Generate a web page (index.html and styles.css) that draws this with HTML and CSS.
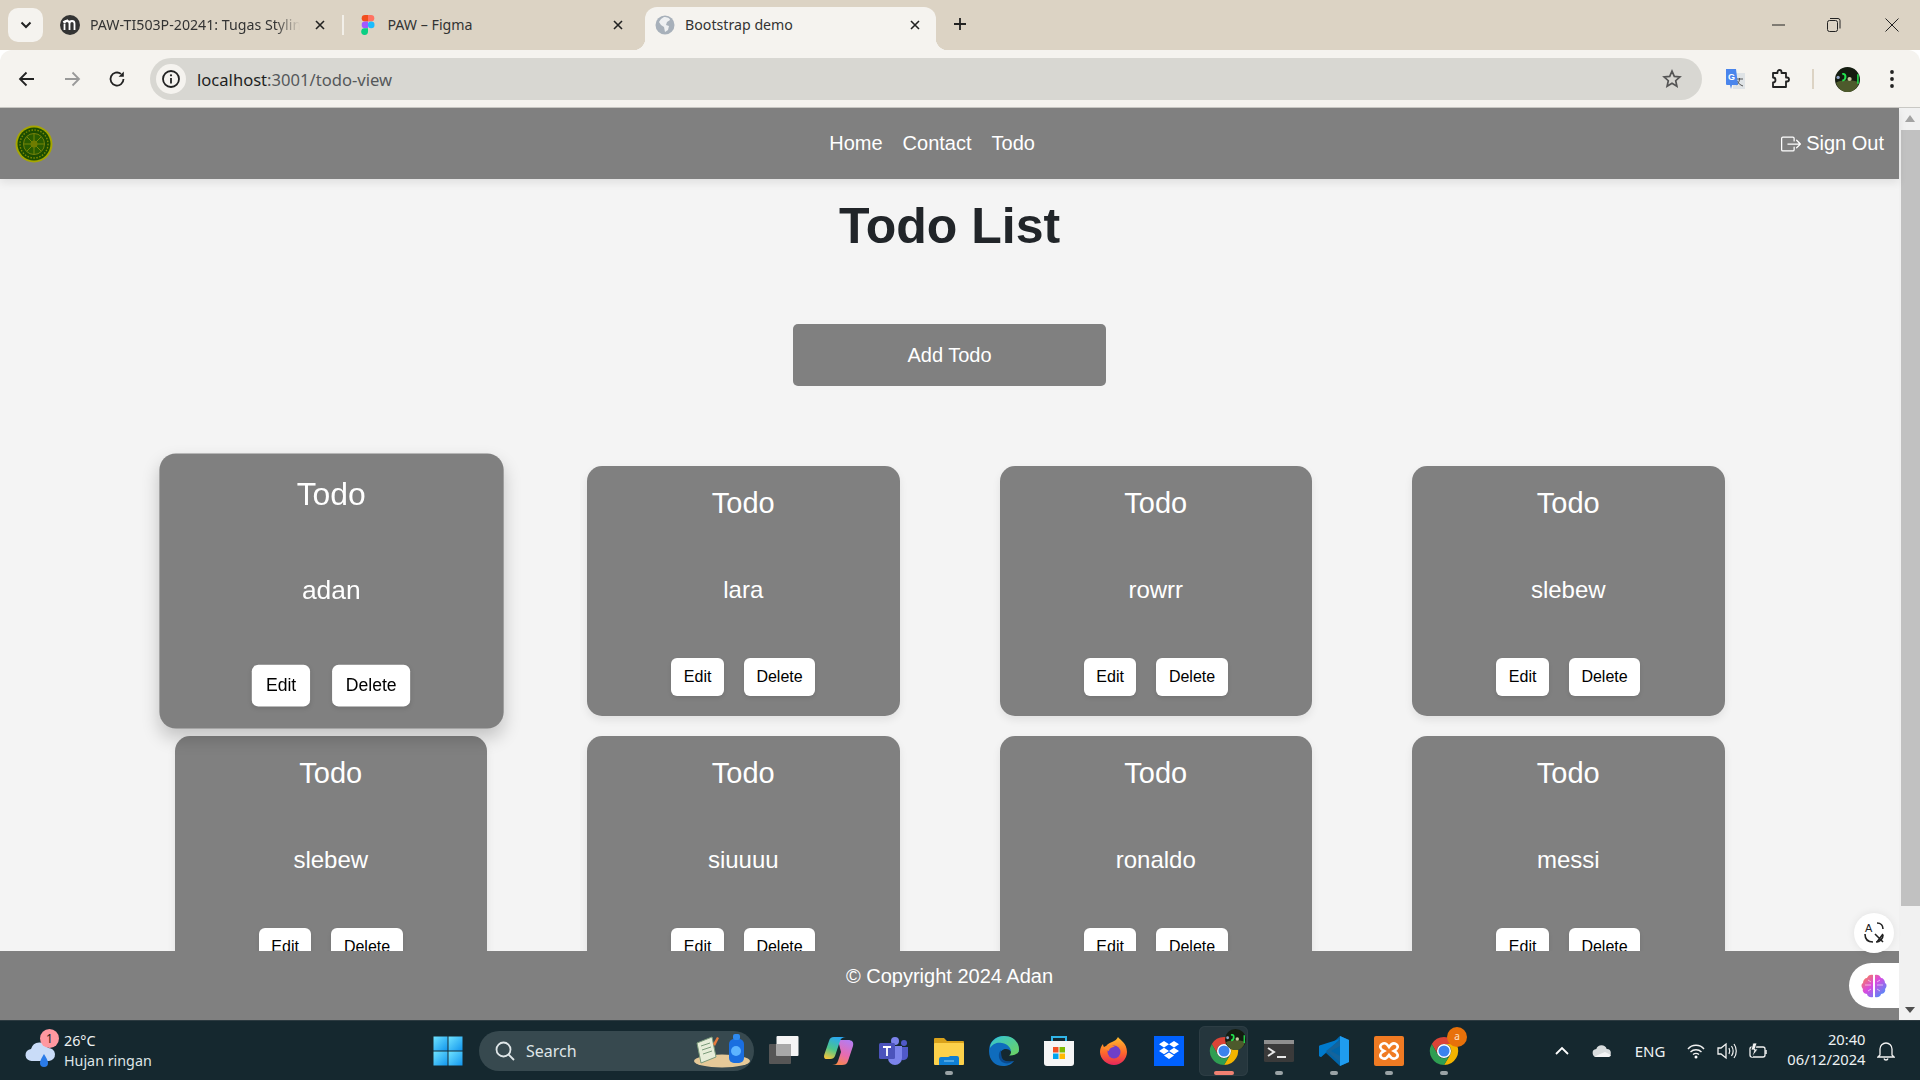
FILE: index.html
```html
<!DOCTYPE html>
<html lang="en">
<head>
<meta charset="utf-8">
<title>Bootstrap demo</title>
<link rel="stylesheet" href="styles.css">
</head>
<body>
<svg class="defs" width="0" height="0" aria-hidden="true">
  <defs>
    <symbol id="chrome" viewBox="0 0 32 32">
      <path fill="#db4437" d="M29 8.5A15 15 0 0 0 3 8.5L9.5 20A7.5 7.5 0 0 1 16 8.5Z"/>
      <path fill="#f4b400" d="M29 8.5A15 15 0 0 1 16 31L22.5 20A7.5 7.5 0 0 0 16 8.5Z"/>
      <path fill="#2f9e52" d="M16 31A15 15 0 0 1 3 8.5L9.5 20A7.5 7.5 0 0 0 22.5 20Z"/>
      <circle cx="16" cy="16" r="7.5" fill="#fff"/>
      <circle cx="16" cy="16" r="5.9" fill="#3b82ee"/>
    </symbol>
    <symbol id="avatar" viewBox="0 0 24 24">
      <circle cx="12" cy="12" r="12" fill="#141c10"/>
      <path fill="#4d5a2c" d="M1 15c5-3 17-3 22 0-2 6-6 9-11 9S3 21 1 15z"/>
      <circle cx="3" cy="10" r="1.6" fill="#8fa5c9"/>
      <path d="M7 7c4-2 4 6 0 6" fill="none" stroke="#22e24e" stroke-width="2"/>
      <circle cx="14" cy="11.500" r="2" fill="#c8c8a0"/>
      <path d="M22 7v9" stroke="#22e24e" stroke-width="1.500"/>
    </symbol>
    <linearGradient id="copilotA" x1="0.6" y1="0" x2="0.2" y2="1">
      <stop offset="0" stop-color="#2aa8f2"/><stop offset=".55" stop-color="#4cc58c"/><stop offset="1" stop-color="#f2c53d"/>
    </linearGradient>
    <linearGradient id="copilotB" x1="0.7" y1="0" x2="0.3" y2="1">
      <stop offset="0" stop-color="#b57cf0"/><stop offset=".55" stop-color="#e76bb0"/><stop offset="1" stop-color="#f7884a"/>
    </linearGradient>
    <linearGradient id="edgeA" x1="0" y1="0" x2="1" y2="1">
      <stop offset="0" stop-color="#32c4d8"/><stop offset="1" stop-color="#6fd35c"/>
    </linearGradient>
    <linearGradient id="foxA" x1="0" y1="0" x2="0" y2="1">
      <stop offset="0" stop-color="#ffbd2e"/><stop offset=".55" stop-color="#ff6a2a"/><stop offset="1" stop-color="#e6265c"/>
    </linearGradient>
    <linearGradient id="brainA" x1="0" y1="0" x2="1" y2="1">
      <stop offset="0" stop-color="#ff8a3c"/><stop offset=".45" stop-color="#d94be0"/><stop offset="1" stop-color="#2f9bff"/>
    </linearGradient>
    <linearGradient id="winA" x1="0" y1="0" x2="1" y2="1">
      <stop offset="0" stop-color="#6fe3ff"/><stop offset="1" stop-color="#1296ee"/>
    </linearGradient>
  </defs>
</svg>

<div class="screen">
  <header class="tabstrip">
    <button class="tab-search" type="button">
      <svg width="12" height="8" viewBox="0 0 12 8"><path d="M1.500 1.500 6 6l4.500-4.500" fill="none" stroke="#222" stroke-width="2"/></svg>
    </button>
    <div class="tabs">
      <div class="tab">
        <svg class="favicon" viewBox="0 0 20 20"><circle cx="10" cy="10" r="10" fill="#333"/><path d="M4.500 15V9M9.500 15V8.500a2.500 2.500 0 0 0-5 0M14.500 15V8.500a2.500 2.500 0 0 0-5 0" fill="none" stroke="#fff" stroke-width="1.800"/><path d="M3 7l5-2" stroke="#fff" stroke-width="1.500"/></svg>
        <span class="tab-title tab-title-fade">PAW-TI503P-20241: Tugas Stylin</span>
        <svg class="tab-close" viewBox="0 0 10 10"><path d="M1 1l8 8M9 1l-8 8" stroke="#222" stroke-width="1.600"/></svg>
        <span class="tab-sep"></span>
      </div>
      <div class="tab">
        <svg class="favicon" viewBox="0 0 20 20"><path fill="#f24e1e" d="M10 0H7a3.300 3.300 0 0 0 0 6.600h3z"/><path fill="#ff7262" d="M10 0h3a3.300 3.300 0 0 1 0 6.600h-3z"/><path fill="#a259ff" d="M10 6.600H7a3.300 3.300 0 0 0 0 6.600h3z"/><circle cx="13.200" cy="9.900" r="3.300" fill="#1abcfe"/><path fill="#0acf83" d="M10 13.200H7a3.400 3.400 0 1 0 3 3.400z"/></svg>
        <span class="tab-title">PAW – Figma</span>
        <svg class="tab-close" viewBox="0 0 10 10"><path d="M1 1l8 8M9 1l-8 8" stroke="#222" stroke-width="1.600"/></svg>
      </div>
      <div class="tab tab-active">
        <svg class="favicon" viewBox="0 0 20 20"><circle cx="10" cy="10" r="9.500" fill="#a7b0ba"/><path fill="#eef0f2" d="M9 2c3 0 6 1 6 3l-3 2-1 3 3 1-1 4-3 2-1-5-3-2-2-3 2-3z"/></svg>
        <span class="tab-title">Bootstrap demo</span>
        <svg class="tab-close" viewBox="0 0 10 10"><path d="M1 1l8 8M9 1l-8 8" stroke="#222" stroke-width="1.600"/></svg>
      </div>
    </div>
    <svg class="new-tab" width="14" height="14" viewBox="0 0 14 14"><path d="M7 1v12M1 7h12" stroke="#222" stroke-width="1.800"/></svg>
    <div class="window-controls">
      <svg width="14" height="14" viewBox="0 0 14 14"><path d="M0 7h13" stroke="#222" stroke-width="1"/></svg>
      <svg class="win-restore" width="14" height="14" viewBox="0 0 14 14"><rect x=".5" y="2.500" width="10" height="11" rx="2" fill="none" stroke="#222"/><path d="M3 .5h8a2 2 0 0 1 2 2v8" fill="none" stroke="#222"/></svg>
      <svg width="14" height="14" viewBox="0 0 14 14"><path d="M.5.500l13 13M13.500.500l-13 13" stroke="#222"/></svg>
    </div>
  </header>

  <nav class="toolbar">
    <button class="tool" type="button"><svg width="18" height="16" viewBox="0 0 18 16"><path d="M16 8H2M8.500 1.500 2 8l6.500 6.500" fill="none" stroke="#222" stroke-width="1.800"/></svg></button>
    <button class="tool" type="button"><svg width="18" height="16" viewBox="0 0 18 16"><path d="M2 8h14M9.500 1.500 16 8l-6.500 6.500" fill="none" stroke="#999" stroke-width="1.800"/></svg></button>
    <button class="tool" type="button"><svg width="18" height="18" viewBox="0 0 18 18"><path d="M15.500 9A6.500 6.500 0 1 1 13 3.900" fill="none" stroke="#222" stroke-width="1.800"/><path d="M15.800 1.500v5.200h-5.200z" fill="#222"/></svg></button>
    <div class="omnibox">
      <span class="site-info"><svg width="20" height="20" viewBox="0 0 20 20"><circle cx="10" cy="10" r="8" fill="none" stroke="#222" stroke-width="1.800"/><path d="M10 9v5.500" stroke="#222" stroke-width="1.800"/><circle cx="10" cy="6.300" r="1.100" fill="#222"/></svg></span>
      <span class="url"><span class="url-host">localhost</span>:3001/todo-view</span>
      <svg class="star" width="20" height="20" viewBox="0 0 20 20"><path d="M10 2.200l2.300 5.200 5.600.6-4.200 3.700 1.200 5.500-4.900-2.900-4.900 2.900 1.200-5.500L2.100 8l5.600-.6z" fill="none" stroke="#555" stroke-width="1.700"/></svg>
    </div>
    <div class="tool-group">
      <span class="tool"><svg width="22" height="22" viewBox="0 0 22 22"><rect x="9" y="5" width="12" height="16" fill="#dfe3e6"/><path d="M12 11h7M15.500 10v1c0 3-2 5-3.500 6M13 13c1 2 3 4 6 5" fill="none" stroke="#555" stroke-width="1"/><path fill="#4a85ec" d="M2 1h10l2 16H8l-1 4-1-4H3a1 1 0 0 1-1-1z"/><text class="gt-letter" x="4" y="12">G</text></svg></span>
      <span class="tool"><svg width="20" height="20" viewBox="0 0 20 20"><path d="M2 4h4.500V3a2 2 0 0 1 4 0v1H15v4.500h1a2 2 0 0 1 0 4h-1V18H2v-4.500a2.500 2.500 0 0 0 0-5z" fill="none" stroke="#222" stroke-width="1.800" stroke-linejoin="round"/></svg></span>
      <span class="tool-divider"></span>
      <span class="tool"><svg width="25" height="25"><use href="#avatar"/></svg></span>
      <span class="tool"><svg width="6" height="20" viewBox="0 0 6 20"><circle cx="3" cy="3" r="1.900" fill="#222"/><circle cx="3" cy="10" r="1.900" fill="#222"/><circle cx="3" cy="17" r="1.900" fill="#222"/></svg></span>
    </div>
  </nav>

  <div class="viewport">
    <div class="page">
      <div class="site-nav">
        <a class="brand">
          <svg width="38" height="38" viewBox="0 0 38 38">
            <circle cx="19" cy="19" r="18.500" fill="#a6a600"/>
            <circle cx="19" cy="19" r="16.500" fill="#1c4d00"/>
            <circle cx="19" cy="19" r="14" fill="none" stroke="#7f8a00" stroke-width="1.400" stroke-dasharray="1.500 1.500"/>
            <circle cx="19" cy="19" r="10.500" fill="#2a5c00" stroke="#76820a" stroke-width="1"/>
            <g stroke="#808c08" stroke-width=".9">
              <path d="M19 9v20M9 19h20M11.900 11.900l14.200 14.200M26.100 11.900 11.900 26.100"/>
            </g>
            <circle cx="19" cy="19" r="3.500" fill="#6f7c00"/>
          </svg>
        </a>
        <div class="site-links">
          <a class="site-link">Home</a>
          <a class="site-link">Contact</a>
          <a class="site-link">Todo</a>
        </div>
        <a class="sign-out">
          <svg width="20" height="20" viewBox="0 0 16 16" fill="#fff"><path fill-rule="evenodd" d="M10 12.500a.5.5 0 0 1-.5.5h-8a.5.5 0 0 1-.5-.5v-9a.5.5 0 0 1 .5-.5h8a.5.5 0 0 1 .5.500v2a.5.5 0 0 0 1 0v-2A1.500 1.500 0 0 0 9.500 2h-8A1.500 1.500 0 0 0 0 3.500v9A1.500 1.500 0 0 0 1.500 14h8a1.500 1.500 0 0 0 1.500-1.500v-2a.5.5 0 0 0-1 0z"/><path fill-rule="evenodd" d="M15.854 8.354a.5.5 0 0 0 0-.708l-3-3a.5.5 0 0 0-.708.708L14.293 7.500H5.500a.5.5 0 0 0 0 1h8.793l-2.147 2.146a.5.5 0 0 0 .708.708z"/></svg>
          <span>Sign Out</span>
        </a>
      </div>

      <main class="content">
        <h1 class="page-title">Todo List</h1>
        <button class="add-btn" type="button">Add Todo</button>
        <section class="todo-grid">
          <article class="todo-card todo-card-hover">
            <h2 class="todo-title">Todo</h2><p class="todo-text">adan</p>
            <div class="todo-actions"><button class="todo-btn" type="button">Edit</button><button class="todo-btn" type="button">Delete</button></div>
          </article>
          <article class="todo-card">
            <h2 class="todo-title">Todo</h2><p class="todo-text">lara</p>
            <div class="todo-actions"><button class="todo-btn" type="button">Edit</button><button class="todo-btn" type="button">Delete</button></div>
          </article>
          <article class="todo-card">
            <h2 class="todo-title">Todo</h2><p class="todo-text">rowrr</p>
            <div class="todo-actions"><button class="todo-btn" type="button">Edit</button><button class="todo-btn" type="button">Delete</button></div>
          </article>
          <article class="todo-card">
            <h2 class="todo-title">Todo</h2><p class="todo-text">slebew</p>
            <div class="todo-actions"><button class="todo-btn" type="button">Edit</button><button class="todo-btn" type="button">Delete</button></div>
          </article>
          <article class="todo-card">
            <h2 class="todo-title">Todo</h2><p class="todo-text">slebew</p>
            <div class="todo-actions"><button class="todo-btn" type="button">Edit</button><button class="todo-btn" type="button">Delete</button></div>
          </article>
          <article class="todo-card">
            <h2 class="todo-title">Todo</h2><p class="todo-text">siuuuu</p>
            <div class="todo-actions"><button class="todo-btn" type="button">Edit</button><button class="todo-btn" type="button">Delete</button></div>
          </article>
          <article class="todo-card">
            <h2 class="todo-title">Todo</h2><p class="todo-text">ronaldo</p>
            <div class="todo-actions"><button class="todo-btn" type="button">Edit</button><button class="todo-btn" type="button">Delete</button></div>
          </article>
          <article class="todo-card">
            <h2 class="todo-title">Todo</h2><p class="todo-text">messi</p>
            <div class="todo-actions"><button class="todo-btn" type="button">Edit</button><button class="todo-btn" type="button">Delete</button></div>
          </article>
        </section>
      </main>

      <footer class="site-footer">© Copyright 2024 Adan</footer>

      <div class="float-translate">
        <svg width="24" height="24" viewBox="0 0 24 24"><text class="float-a" x="3" y="11">A</text><path d="M15 2c4 0 6 3 6 6M21 14c0 4-3 7-7 7M3 13c0 5 3 8 8 8" fill="none" stroke="#222" stroke-width="1.600"/><path d="M13 13l8 8M21 13l-6 8" stroke="#222" stroke-width="1.600"/></svg>
      </div>
      <div class="float-brain">
        <svg width="26" height="26" viewBox="0 0 26 26"><path fill="url(#brainA)" d="M12 2v22c-3 1-6-1-6-3-3 0-5-3-4-5-2-2-2-5 0-6 0-3 2-5 4-5 1-3 4-4 6-3zM14 2c2-1 5 0 6 3 2 0 4 2 4 5 2 1 2 4 0 6 1 2-1 5-4 5 0 2-3 4-6 3z"/><path d="M4 12h6M16 12h6M7 7l3 2M19 7l-3 2M7 18l3-2M19 18l-3-2" stroke="#fff" stroke-width=".8" opacity=".7"/></svg>
      </div>
    </div>

    <div class="scrollbar">
      <span class="scroll-up"></span>
      <span class="scroll-thumb"></span>
      <span class="scroll-down"></span>
    </div>
  </div>

  <footer class="taskbar">
    <div class="weather">
      <div class="weather-icon">
        <svg width="32" height="30" viewBox="0 0 32 30"><path fill="#c9dcf8" d="M8 22a6 6 0 0 1-1-12 9 9 0 0 1 17-1 6.500 6.500 0 0 1 1 13z"/><path fill="#2a7be8" d="M20 15c3 5 4 7 4 9a4 4 0 0 1-8 0c0-2 1-4 4-9z"/></svg>
        <span class="weather-badge">1</span>
      </div>
      <div class="weather-text"><span>26°C</span><span class="weather-desc">Hujan ringan</span></div>
    </div>
    <div class="task-slot">
      <svg width="30" height="30" viewBox="0 0 30 30"><rect width="14" height="14" x="0.500" y="0.500" fill="url(#winA)"/><rect width="14" height="14" x="15.500" y="0.500" fill="url(#winA)"/><rect width="14" height="14" x="0.500" y="15.500" fill="url(#winA)"/><rect width="14" height="14" x="15.500" y="15.500" fill="url(#winA)"/></svg>
    </div>
    <div class="search-box">
      <svg width="22" height="22" viewBox="0 0 22 22"><circle cx="9.500" cy="9.500" r="7" fill="none" stroke="#dfe6e8" stroke-width="1.800"/><path d="M14.500 14.500 20 20" stroke="#dfe6e8" stroke-width="1.800"/></svg>
      <span class="search-label">Search</span>
      <svg class="search-art" width="58" height="36" viewBox="0 0 58 36"><ellipse cx="29" cy="28" rx="28" ry="6.500" fill="#e6c998"/><path d="M4 10l15-6 4 20-15 6z" fill="#e6ecd8" stroke="#7a9a7a"/><path d="M8 13l9-3M9 17l9-3M10 21l9-3" stroke="#7a9a7a"/><path d="M20 11l4-7 2 1-4 8z" fill="#e77a3c"/><rect x="36" y="6" width="15" height="24" rx="5" fill="#1a6ee0"/><rect x="40" y="1" width="7" height="6" rx="2" fill="#2e8af0"/><circle cx="43" cy="18" r="5" fill="#5db4ff"/></svg>
    </div>
    <div class="task-slot">
      <svg width="30" height="30" viewBox="0 0 30 30"><rect x="0" y="8" width="22" height="20" rx="1" fill="#565656"/><rect x="7.500" y="0" width="22" height="20" rx="1" fill="#f5f5f5"/><rect x="7.500" y="8" width="14.500" height="12" fill="#a8a8a8"/></svg>
    </div>
    <div class="task-slot">
      <svg width="30" height="30" viewBox="0 0 30 30"><path fill="url(#copilotB)" d="M14 4h10c4 0 6 2 5 6l-5 15c-1 3-3 4-6 4H8c3 0 5-1 6-4l3-9z"/><path fill="url(#copilotA)" d="M10 1h12c-3 0-5 1-6 4l-5 15c-1 2-2 3-5 3H3c-3 0-3.500-2-2.500-5L5 5c1-3 2-4 5-4z"/></svg>
    </div>
    <div class="task-slot">
      <svg width="30" height="30" viewBox="0 0 30 30"><circle cx="16" cy="5" r="4" fill="#7b83eb"/><circle cx="25" cy="7" r="3" fill="#5059c9"/><path fill="#5059c9" d="M20 11h9v9a5 5 0 0 1-9 2z"/><path fill="#7b83eb" d="M9 10h14v12a7 7 0 0 1-14 0z"/><rect x="0" y="7" width="16" height="16" rx="1.500" fill="#4b53bc"/><path d="M4 11h8M8 11v9" stroke="#fff" stroke-width="1.800"/></svg>
    </div>
    <div class="task-slot task-running">
      <svg width="30" height="28" viewBox="0 0 30 28"><path fill="#d9a21b" d="M0 2a1 1 0 0 1 1-1h9l3 3h16a1 1 0 0 1 1 1v5H0z"/><rect y="6" width="30" height="22" rx="1" fill="#fcd14b"/><path fill="#0f7fd4" d="M5 22q0-2 2-2h7q1 0 2-1h7q2 0 2 2v7H5z"/><path d="M10 24h10" stroke="#8fd0f5" stroke-width="1"/></svg>
    </div>
    <div class="task-slot">
      <svg width="30" height="30" viewBox="0 0 30 30"><path fill="#0f6cbd" d="M15 0C6 0 0 6 0 15c0 9 6 15 14 15 5 0 9-2 11-5-3 1-10 2-13-3-2-4 0-9 5-9 4 0 5 3 5 3h8C30 6 24 0 15 0z"/><path fill="url(#edgeA)" d="M15 0C7 0 1 6 1 12c3-5 8-6 12-5 6 1 9 5 9 9 0 2-1 3-2 3.500 4 .5 10-1 10-6C30 6 24 0 15 0z"/><path fill="#0a4a8f" d="M12 14c-3 3-3 9 1 12 3 2 8 2 12-1-4 1-10 1-12-3-1-3-1-6-1-8z"/></svg>
    </div>
    <div class="task-slot">
      <svg width="30" height="30" viewBox="0 0 30 30"><path d="M8 5V1h14v4" fill="none" stroke="#30b5e8" stroke-width="2"/><path fill="#f5f5f5" d="M0 5h30v22a3 3 0 0 1-3 3H3a3 3 0 0 1-3-3z"/><rect x="9" y="11" width="5.500" height="5.500" fill="#f25022"/><rect x="15.500" y="11" width="5.500" height="5.500" fill="#7fba00"/><rect x="9" y="17.500" width="5.500" height="5.500" fill="#00a4ef"/><rect x="15.500" y="17.500" width="5.500" height="5.500" fill="#ffb900"/></svg>
    </div>
    <div class="task-slot">
      <svg width="30" height="30" viewBox="0 0 30 30"><path fill="url(#foxA)" d="M19 1c2 3 9 6 9 15 0 7-6 13-13 13S1 23 1 16c0-3 1-6 3-8 0 2 1 3 2 4 1-3 4-5 7-6 3-1 5-3 6-5z"/><circle cx="15" cy="16" r="6.500" fill="#6e3fc8"/><path fill="#ff8a2a" d="M4 12c3-3 9-3 12-1-4 0-6 2-6 4-2-1-4-2-6-3z"/></svg>
    </div>
    <div class="task-slot">
      <svg width="30" height="30" viewBox="0 0 30 30"><rect width="30" height="30" fill="#0061fe"/><path fill="#fff" d="M10 5l5 3.200-5 3.200-5-3.200zM20 5l5 3.200-5 3.200-5-3.200zM10 11.800l5 3.200-5 3.200L5 15zM20 11.800l5 3.200-5 3.200L15 15zM10 19.500l5-3 5 3-5 3.500z"/></svg>
    </div>
    <div class="task-slot task-active">
      <svg width="30" height="30"><use href="#chrome"/></svg>
      <svg class="task-avatar" width="21" height="21"><use href="#avatar"/></svg>
    </div>
    <div class="task-slot task-running">
      <svg width="30" height="22" viewBox="0 0 30 22"><rect width="30" height="22" rx="1.500" fill="#3a3a3a"/><rect width="30" height="4" fill="#8f8f8f"/><path d="M4 8l6 4-6 4" fill="none" stroke="#e8e8e8" stroke-width="2"/><path d="M13 17h9" stroke="#e8e8e8" stroke-width="2"/></svg>
    </div>
    <div class="task-slot task-running">
      <svg width="30" height="30" viewBox="0 0 30 30"><path fill="#0065a9" d="M21 0 7 13 2 9 0 10v10l2 1 5-4 14 13 9-4V4z"/><path fill="#007acc" d="M2 9 0 10v10l2 1 19-18z"/><path fill="#1f9cf0" d="M21 0v30l9-4V4z"/><path fill="#14649c" d="M7 15l14 11V20l-9-5 9-5V4z"/></svg>
    </div>
    <div class="task-slot task-running">
      <svg width="30" height="30" viewBox="0 0 30 30"><rect width="30" height="30" rx="2" fill="#f07b23"/><path d="M8 8c3-2 5 0 7 3 2-3 4-5 7-3s2 5-2 7c4 2 5 5 2 7s-5 0-7-3c-2 3-4 5-7 3s-2-5 2-7c-4-2-5-5-2-7z" fill="none" stroke="#fff" stroke-width="2.600"/></svg>
    </div>
    <div class="task-slot task-running">
      <svg width="30" height="30"><use href="#chrome"/></svg>
      <span class="chrome-badge">a</span>
    </div>

    <div class="tray">
      <span class="tray-item tray-caret"><svg width="14" height="9" viewBox="0 0 14 9"><path d="M1 8l6-6 6 6" fill="none" stroke="#fff" stroke-width="1.800"/></svg></span>
      <span class="tray-item tray-cloud"><svg width="20" height="14" viewBox="0 0 20 14"><path fill="#d8dcdd" d="M5 13a4 4 0 0 1-.7-8 5.500 5.500 0 0 1 10.400 0A4 4 0 0 1 15 13z"/><path fill="#f5f5f5" d="M2 13h15a3 3 0 0 0 2-2l-6-3-5 2z"/></svg></span>
      <span class="tray-item tray-lang">ENG</span>
      <span class="tray-item tray-icon"><svg width="18" height="16" viewBox="0 0 18 16"><path d="M1 6c4-5 12-5 16 0M3.500 9c3-3 8-3 11 0M6 11.500c2-1.500 4-1.500 6 0" fill="none" stroke="#f2f2f2" stroke-width="1.400"/><circle cx="9" cy="14" r="1.500" fill="#fff"/></svg></span>
      <span class="tray-item tray-icon"><svg width="20" height="18" viewBox="0 0 20 18"><path d="M1 6h3l5-4v14l-5-4H1z" fill="none" stroke="#f2f2f2" stroke-width="1.300"/><path d="M12 6c1 2 1 4 0 6M14.500 4c2 3 2 7 0 10M17 2c3 4 3 10 0 14" fill="none" stroke="#f2f2f2" stroke-width="1.200"/></svg></span>
      <span class="tray-item tray-icon"><svg width="22" height="18" viewBox="0 0 22 18"><rect x="4" y="5" width="15" height="10" rx="2" fill="none" stroke="#f2f2f2" stroke-width="1.300"/><path d="M20 8v4" stroke="#f2f2f2" stroke-width="1.500"/><path d="M7 1 5 8h3l-2 7 6-8H9l2-6z" fill="#f2f2f2" stroke="#15282f" stroke-width=".8"/></svg></span>
      <div class="clock"><span>20:40</span><span>06/12/2024</span></div>
      <span class="tray-item tray-bell"><svg width="18" height="20" viewBox="0 0 18 20"><path d="M3 14V8a6 6 0 0 1 12 0v6l2 2H1zM7 17.500c.5 2 3.500 2 4 0" fill="none" stroke="#f2f2f2" stroke-width="1.300"/></svg></span>
    </div>
  </footer>
</div>
</body>
</html>
```

FILE: styles.css
```css
* { box-sizing: border-box; }

html, body {
  margin: 0;
  width: 1920px;
  height: 1080px;
  overflow: hidden;
  font-family: "Liberation Sans", Arial, sans-serif;
}

button { font-family: inherit; border: 0; }

.defs { position: absolute; }

.screen {
  display: flex;
  flex-direction: column;
  width: 1920px;
  height: 1080px;
}

/* ---------- browser chrome ---------- */
.tabstrip {
  flex: 0 0 50px;
  display: flex;
  align-items: center;
  background: #dcd3c4;
  padding-left: 8px;
}

.tab-search {
  flex: 0 0 35px;
  height: 34px;
  margin-top: -1px;
  border-radius: 10px;
  background: #f5f3ef;
  display: flex;
  align-items: center;
  justify-content: center;
  padding: 0;
}

.tabs {
  display: flex;
  gap: 6.5px;
  margin-left: 7px;
  align-self: flex-end;
}

.tab {
  position: relative;
  width: 291px;
  height: 43px;
  padding: 0 16px 8px 10px;
  display: flex;
  align-items: center;
  font-family: "Noto Sans", sans-serif;
  font-size: 14.200px;
  color: #333;
}

.tab-active {
  background: #f5f3ef;
  border-radius: 12px 12px 0 0;
}

.tab-active::before,
.tab-active::after {
  content: "";
  position: absolute;
  bottom: 0;
  width: 12px;
  height: 12px;
}

.tab-active::before {
  left: -12px;
  background: radial-gradient(circle at 0 0, transparent 12px, #f5f3ef 12.5px);
}

.tab-active::after {
  right: -12px;
  background: radial-gradient(circle at 100% 0, transparent 12px, #f5f3ef 12.5px);
}

.favicon { flex: 0 0 20px; width: 20px; height: 20px; }

.tab-title {
  flex: 1;
  margin-left: 10px;
  white-space: nowrap;
  overflow: hidden;
}

.tab-title-fade {
  -webkit-mask-image: linear-gradient(90deg, #000 88%, transparent);
  mask-image: linear-gradient(90deg, #000 88%, transparent);
}

.tab-close { flex: 0 0 10px; width: 10px; height: 10px; margin: 0 0 0 15px; }

.tab-sep {
  position: absolute;
  right: -3px;
  top: 8px;
  width: 2px;
  height: 20px;
  background: #f2efe9;
}

.new-tab { margin: -3px 0 0 17px; }

.window-controls {
  margin-left: auto;
  margin-top: -1px;
  width: 148px;
  padding-right: 21px;
  display: flex;
  justify-content: space-between;
}

.win-restore { margin-right: 4px; }

.toolbar {
  flex: 0 0 58px;
  display: flex;
  align-items: center;
  padding: 1px 6px 0 5px;
  background: #f5f3ef;
  border-radius: 12px 12px 0 0;
  border-bottom: 1px solid #c9c8c4;
  position: relative;
}

.tool {
  flex: 0 0 44px;
  width: 44px;
  height: 40px;
  display: flex;
  align-items: center;
  justify-content: center;
  background: none;
  padding: 0;
}

.toolbar > .tool + .tool { margin-left: 1px; }

.omnibox {
  flex: 1;
  height: 42px;
  margin-left: 11px;
  border-radius: 21px;
  background: #d8d7d2;
  display: flex;
  align-items: center;
  padding: 0 20px 0 6px;
}

.site-info {
  width: 30px;
  height: 30px;
  border-radius: 50%;
  background: #f5f3ef;
  display: flex;
  align-items: center;
  justify-content: center;
}

.url {
  margin-left: 11px;
  font-family: "Noto Sans", sans-serif;
  font-size: 16.600px;
  color: #55585a;
  white-space: nowrap;
}

.url-host { color: #1f1f1f; }

.star { margin-left: auto; }

.tool-group {
  display: flex;
  align-items: center;
  margin-left: 11px;
  gap: 2px;
}

.tool-group .tool:nth-child(5) { margin-left: -1px; }

.tool-divider {
  width: 2px;
  height: 20px;
  margin: 0 9px 0 7px;
  background: #dcd3c4;
}

.gt-letter {
  font-family: "Liberation Sans", sans-serif;
  font-weight: 700;
  font-size: 9px;
  fill: #fff;
}

/* ---------- page viewport ---------- */
.viewport {
  flex: 1;
  min-height: 0;
  display: flex;
}

.page {
  position: relative;
  flex: 1;
  min-width: 0;
  display: flex;
  flex-direction: column;
  background: #f4f4f4;
}

.site-nav {
  position: relative;
  z-index: 2;
  flex: 0 0 71px;
  display: flex;
  align-items: center;
  justify-content: space-between;
  padding: 0 15px;
  background: #808080;
  box-shadow: 0 4px 8px rgba(0, 0, 0, 0.08);
  color: #fff;
  font-size: 20px;
}

.brand { display: flex; width: 68px; }

.site-links { display: flex; gap: 20px; }

.sign-out {
  display: flex;
  align-items: center;
  gap: 5px;
}

.content {
  flex: 1;
  min-height: 0;
  overflow: hidden;
  display: flex;
  flex-direction: column;
  align-items: center;
  padding-top: 17px;
}

.page-title {
  margin: 0;
  font-size: 50px;
  line-height: 60px;
  font-weight: 700;
  color: #212529;
}

.add-btn {
  flex: none;
  width: 313px;
  height: 62px;
  margin-top: 68px;
  border-radius: 5px;
  background: #808080;
  color: #fff;
  font-size: 20px;
}

.todo-grid {
  flex: none;
  margin-top: 80px;
  width: 1550px;
  display: grid;
  grid-template-columns: repeat(4, 312.500px);
  grid-auto-rows: 250px;
  gap: 20px 100px;
}

.todo-card {
  display: flex;
  flex-direction: column;
  align-items: center;
  justify-content: space-between;
  padding: 20px;
  border-radius: 15px;
  background: #808080;
  color: #fff;
  box-shadow: 0 4px 8px rgba(0, 0, 0, 0.08);
}

.todo-card-hover {
  position: relative;
  z-index: 1;
  transform: scale(1.1);
  box-shadow: 0 8px 16px rgba(0, 0, 0, 0.2);
}

.todo-title {
  margin: 0;
  font-size: 29px;
  line-height: 35px;
  font-weight: 400;
}

.todo-text {
  margin: 2px 0 0;
  font-size: 24px;
  line-height: 1.2;
}

.todo-actions { display: flex; gap: 20px; }

.todo-btn {
  height: 38px;
  padding: 0 12.500px;
  border-radius: 6px;
  background: #fff;
  color: #000;
  font-size: 16px;
  box-shadow: 0 2px 4px rgba(0, 0, 0, 0.1);
}

.site-footer {
  flex: 0 0 69px;
  padding-top: 13px;
  background: #808080;
  color: #fff;
  font-size: 20px;
  line-height: 24px;
  text-align: center;
}

.float-translate {
  position: absolute;
  right: 5px;
  top: 805px;
  width: 40px;
  height: 40px;
  border-radius: 50%;
  background: #fff;
  box-shadow: 0 0 8px rgba(0, 0, 0, 0.08);
  display: flex;
  align-items: center;
  justify-content: center;
}

.float-a {
  font-family: "Liberation Sans", sans-serif;
  font-size: 11px;
  fill: #222;
}

.float-brain {
  position: absolute;
  right: 0;
  top: 855px;
  width: 50px;
  height: 45px;
  border-radius: 23px 0 0 23px;
  background: #fff;
  display: flex;
  align-items: center;
  justify-content: center;
}

.scrollbar {
  flex: 0 0 21px;
  background: #f1f1f1;
  display: flex;
  flex-direction: column;
  align-items: center;
}

.scroll-up,
.scroll-down {
  flex: none;
  width: 0;
  height: 0;
  border-left: 5px solid transparent;
  border-right: 5px solid transparent;
}

.scroll-up { margin-top: 7px; border-bottom: 7px solid #a3a3a3; }

.scroll-thumb {
  flex: none;
  width: 19px;
  height: 776px;
  margin: 8px 0 0 2px;
  background: #c1c1c1;
}

.scroll-down { margin-top: 101px; border-top: 6px solid #505050; }

/* ---------- taskbar ---------- */
.taskbar {
  flex: 0 0 60px;
  display: flex;
  align-items: center;
  background: #15282f;
  border-top: 1px solid #2c3a40;
  font-family: "Noto Sans", sans-serif;
  color: #eef2f3;
  font-size: 14.300px;
}

.weather {
  flex: 0 0 420px;
  display: flex;
  align-items: center;
  padding-left: 24px;
}

.weather-icon { position: relative; width: 32px; height: 30px; margin-top: 6px; }

.weather-badge {
  position: absolute;
  left: 16px;
  top: -10px;
  width: 19px;
  height: 19px;
  border-radius: 50%;
  background: #ff98a0;
  color: #222;
  font-size: 12px;
  line-height: 19px;
  text-align: center;
}

.weather-text {
  display: flex;
  flex-direction: column;
  margin-left: 8px;
  line-height: 20px;
}

.weather-desc { color: #dfe5e7; }

.task-slot {
  position: relative;
  flex: 0 0 55px;
  height: 50px;
  display: flex;
  align-items: center;
  justify-content: center;
}

.task-running::after,
.task-active::after {
  content: "";
  position: absolute;
  bottom: 1px;
  left: 50%;
  width: 8px;
  height: 4px;
  margin-left: -4px;
  border-radius: 2px;
  background: #9aa3a6;
}

.task-active {
  background: #25363d;
  border-radius: 6px;
  flex: 0 0 49px;
  margin: 0 3px;
  box-shadow: inset 0 0 0 1px #2d3d44;
}

.task-active::after {
  width: 20px;
  margin-left: -10px;
  background: #f08172;
}

.task-avatar { position: absolute; left: 26px; top: 3px; }

.chrome-badge {
  position: absolute;
  left: 31px;
  top: 1px;
  width: 20px;
  height: 20px;
  border-radius: 50%;
  background: #e8710a;
  color: #fde2c8;
  font-size: 10px;
  line-height: 19px;
  text-align: center;
}

.search-box {
  flex: 0 0 275px;
  height: 40px;
  margin: 0 2px 0 4px;
  padding-left: 15px;
  border-radius: 20px;
  background: #37494f;
  display: flex;
  align-items: center;
  position: relative;
}

.search-label { margin-left: 10px; font-size: 16px; color: #dfe5e7; }

.search-art { position: absolute; right: 3px; bottom: 2px; }

.tray {
  flex: 1;
  display: flex;
  align-items: center;
  padding-left: 73px;
}

.tray-item {
  display: flex;
  align-items: center;
  justify-content: center;
}

.tray-caret { flex: 0 0 36px; }
.tray-cloud { flex: 0 0 44px; }
.tray-lang { flex: 0 0 52px; font-size: 15px; }
.tray-icon { flex: 0 0 30.500px; }
.tray-lang + .tray-icon { margin-left: 5px; }

.clock {
  flex: 0 0 93px;
  display: flex;
  flex-direction: column;
  align-items: flex-end;
  margin-top: -4px;
  line-height: 20px;
  font-size: 14.700px;
}

.tray-bell { flex: 0 0 40px; }
```
